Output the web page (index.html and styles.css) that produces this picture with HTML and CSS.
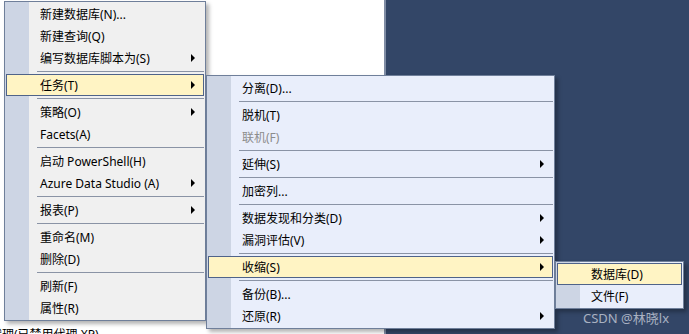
FILE: index.html
```html
<!DOCTYPE html>
<html lang="zh-CN">

<head>
    <meta charset="UTF-8">
    <meta name="viewport" content="width=device-width, initial-scale=1.0">
    <title>对象资源管理器 - 任务菜单</title>
    <link rel="stylesheet" href="styles.css">
</head>

<body>
    <div class="desk">
        <div class="explorer">
            <div class="tree-row">代理(已禁用代理 XP)</div>
        </div>
        <div class="workspace"></div>
    </div>

    <!-- context menu on the database node -->
    <div class="menu menu-main">
        <div class="item"><span class="label">新建数据库(N)...</span></div>
        <div class="item"><span class="label">新建查询(Q)</span></div>
        <div class="item"><span class="label">编写数据库脚本为(S)</span><span class="arrow"></span></div>
        <div class="sep"></div>
        <div class="item active"><span class="label">任务(T)</span><span class="arrow"></span></div>
        <div class="sep"></div>
        <div class="item"><span class="label">策略(O)</span><span class="arrow"></span></div>
        <div class="item"><span class="label">Facets(A)</span></div>
        <div class="sep"></div>
        <div class="item"><span class="label">启动 PowerShell(H)</span></div>
        <div class="item"><span class="label">Azure Data Studio (A)</span><span class="arrow"></span></div>
        <div class="sep"></div>
        <div class="item"><span class="label">报表(P)</span><span class="arrow"></span></div>
        <div class="sep"></div>
        <div class="item"><span class="label">重命名(M)</span></div>
        <div class="item"><span class="label">删除(D)</span></div>
        <div class="sep"></div>
        <div class="item"><span class="label">刷新(F)</span></div>
        <div class="item"><span class="label">属性(R)</span></div>
    </div>

    <!-- 任务 submenu -->
    <div class="menu menu-tasks">
        <div class="item"><span class="label">分离(D)...</span></div>
        <div class="sep"></div>
        <div class="item"><span class="label">脱机(T)</span></div>
        <div class="item disabled"><span class="label">联机(F)</span></div>
        <div class="sep"></div>
        <div class="item"><span class="label">延伸(S)</span><span class="arrow"></span></div>
        <div class="sep"></div>
        <div class="item"><span class="label">加密列...</span></div>
        <div class="sep"></div>
        <div class="item"><span class="label">数据发现和分类(D)</span><span class="arrow"></span></div>
        <div class="item"><span class="label">漏洞评估(V)</span><span class="arrow"></span></div>
        <div class="sep"></div>
        <div class="item active"><span class="label">收缩(S)</span><span class="arrow"></span></div>
        <div class="sep"></div>
        <div class="item"><span class="label">备份(B)...</span></div>
        <div class="item"><span class="label">还原(R)</span><span class="arrow"></span></div>
    </div>

    <!-- 收缩 submenu -->
    <div class="menu menu-shrink">
        <div class="item active"><span class="label">数据库(D)</span></div>
        <div class="item"><span class="label">文件(F)</span></div>
    </div>

    <div class="watermark">CSDN @林晓lx</div>
</body>

</html>
```

FILE: styles.css
```css
:root {
    --navy: #334667;
    --gutter: #cdd5e4;
    --menu-border: #6f7f9a;
    --sep: #8a93a5;
    --hover-bg: #fff4c4;
    --hover-border: #4f6389;
}

* {
    box-sizing: border-box;
}

body {
    margin: 0;
    font-family: "Noto Sans", "Noto Sans CJK SC", sans-serif;
    font-size: 12px;
    color: #000;
    overflow: hidden;
}

.desk {
    display: grid;
    grid-template-columns: 386px 1fr;
    height: 334px;
}

/* object explorer, scrolled so only the tail of the last node shows */
.explorer {
    background: #fff;
    border-right: 2px solid #7f8ca4;
    overflow: hidden;
    display: flex;
    flex-direction: column;
    justify-content: flex-end;
}

.tree-row {
    height: 20px;
    line-height: 20px;
    white-space: nowrap;
    margin: 0 0 -11px -10px;
}

.workspace {
    background: var(--navy);
}

/* menus */
.menu {
    position: absolute;
    border: 1px solid var(--menu-border);
    padding: 1px 0;
    box-shadow: 3px 3px 4px rgba(0, 0, 0, 0.3);
    background: linear-gradient(to right, var(--gutter) 24px, var(--menu-bg) 24px);
}

.menu-main {
    --menu-bg: #f0f0f0;
    left: 4px;
    top: 1px;
    width: 202px;
}

.menu-tasks {
    --menu-bg: #e9eefb;
    left: 206px;
    top: 75px;
    width: 349px;
}

.menu-shrink {
    --menu-bg: #e9eefb;
    left: 555px;
    top: 261px;
    width: 129px;
}

.item {
    display: flex;
    align-items: center;
    height: 22px;
    margin: 0 1px;
    padding: 0 8px 0 33px;
    border: 1px solid transparent;
    white-space: nowrap;
}

.item .label {
    flex: 1;
}

.item.active {
    background: var(--hover-bg);
    border-color: var(--hover-border);
}

.item.disabled {
    color: #8c8c8c;
}

.arrow {
    width: 0;
    height: 0;
    border-style: solid;
    border-width: 4px 0 4px 4px;
    border-color: transparent transparent transparent #000;
}

.sep {
    height: 3px;
    margin: 0 1px 2px 32px;
    border-bottom: 1px solid var(--sep);
}

.watermark {
    position: absolute;
    left: 583px;
    top: 308px;
    font-size: 13px;
    color: #a9b1c1;
    white-space: nowrap;
}
```
